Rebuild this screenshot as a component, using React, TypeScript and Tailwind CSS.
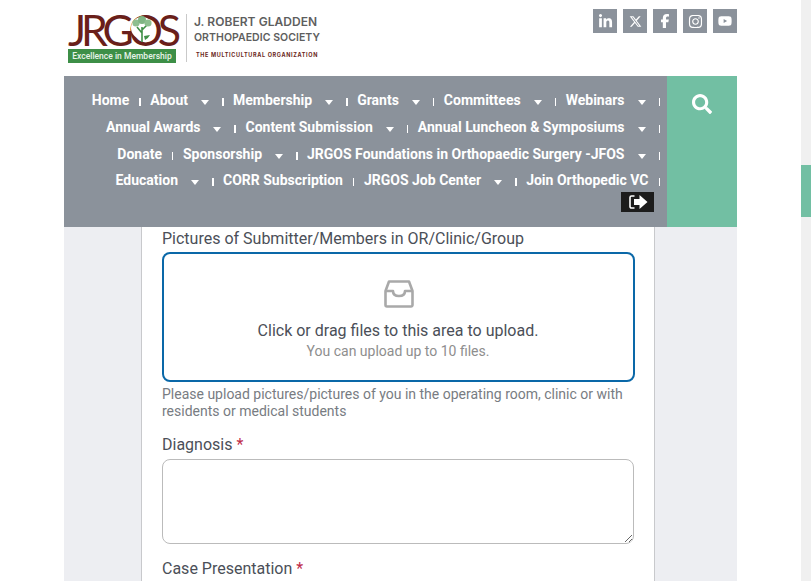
import { FaLinkedinIn, FaXTwitter, FaFacebookF, FaInstagram, FaYoutube } from 'react-icons/fa6';
import { FaSearch } from 'react-icons/fa';

const roboto = { fontFamily: 'Roboto, sans-serif' };

const menuRows = [
  { cls: 'pt-[15px]', items: [['Home', false], ['About', true], ['Membership', true], ['Grants', true], ['Committees', true], ['Webinars', true]] },
  { cls: 'pt-[8px]', items: [['Annual Awards', true], ['Content Submission', true], ['Annual Luncheon & Symposiums', true]] },
  { cls: 'pt-[8px]', items: [['Donate', false], ['Sponsorship', true], ['JRGOS Foundations in Orthopaedic Surgery -JFOS', true]] },
  { cls: 'pt-[7px]', items: [['Education', true], ['CORR Subscription', false], ['JRGOS Job Center', true], ['Join Orthopedic VC', false]] },
] as const;

function Caret() {
  return <span className="ml-[13px] mt-[3px] w-0 h-0 border-x-[4px] border-x-transparent border-t-[5px] border-t-white" />;
}

function NavRow({ items, cls }: { items: readonly (readonly [string, boolean])[]; cls: string }) {
  return (
    <div className={`flex justify-end items-center gap-[9.5px] h-[19px] box-content ${cls}`}>
      {items.map(([label, caret], i) => (
        <div key={i} className="flex items-center">
          <span className="text-[14px] leading-[19px] font-bold text-white whitespace-nowrap">{label}</span>
          {caret && <Caret />}
          <span className={`${caret ? 'ml-[13px]' : 'ml-[10px]'} mt-[3px] w-[1.5px] h-[8px] bg-white`} />
        </div>
      ))}
    </div>
  );
}

function Logo() {
  return (
    <div className="flex items-start">
      <div className="w-[108px] flex flex-col items-stretch">
        <div className="relative h-[35px]">
          <span className="absolute left-0 top-0 text-[43px] leading-[32px] text-[#6a1f1a] tracking-[-5.2px] whitespace-nowrap" style={{ fontFamily: 'Lato, sans-serif' }}>JRGOS</span>
          <svg viewBox="0 0 24 28" className="absolute left-[62px] top-[1px] w-[24px] h-[28px]">
            <circle cx="12" cy="13" r="11" fill="#fff" />
            <path d="M12 27V12M12 18l-5-6M12 15l5-5" stroke="#3f8f46" strokeWidth="1.600" fill="none" />
            <circle cx="6" cy="8" r="3.600" fill="#8dbf8f" />
            <circle cx="12" cy="5" r="4" fill="#7fb583" />
            <circle cx="18" cy="8" r="3.600" fill="#8dbf8f" />
            <path d="M20 20a11 11 0 0 1-5 5l-1-4z" fill="#3f8f46" />
          </svg>
        </div>
        <div className="h-[14px] bg-[#3d8f47] text-[#e9f3ea] text-[8.500px] leading-[14px] text-center font-medium whitespace-nowrap">Excellence in Membership</div>
      </div>
      <div className="ml-[10px] w-px h-[48px] bg-[#c9c9c9]" />
      <div className="ml-[7px] flex flex-col text-[#5e5e5e] whitespace-nowrap" style={{ fontFamily: 'Inter, sans-serif' }}>
        <span className="text-[12px] leading-[14px] font-semibold mt-[1px] tracking-[0.05px]">J. ROBERT GLADDEN</span>
        <span className="text-[10.5px] leading-[13px] font-semibold mt-[2px] tracking-[0.05px]">ORTHOPAEDIC SOCIETY</span>
        <span className="text-[5.5px] leading-[8px] font-bold mt-[7px] ml-[2px] text-[#6a1f1a] tracking-[0.65px]">THE MULTICULTURAL ORGANIZATION</span>
      </div>
    </div>
  );
}

export default function App() {
  const socials = [
    { Icon: FaLinkedinIn, cls: 'text-[15px]' },
    { Icon: FaXTwitter, cls: 'text-[13px] text-[#e4e6e9]' },
    { Icon: FaFacebookF, cls: 'text-[14px]' },
    { Icon: FaInstagram, cls: 'text-[15px]' },
    { Icon: FaYoutube, cls: 'text-[14px]' },
  ];

  return (
    <div className="h-[581px] w-[811px] overflow-hidden bg-white flex" style={roboto}>
      <div className="w-[801px] shrink-0 pl-[64px] pr-[64px]">
        <header className="flex justify-between h-[76px]">
          <div className="pl-[4px] pt-[14px]"><Logo /></div>
          <div className="flex gap-[6px] pt-[9px]">
            {socials.map(({ Icon, cls }, i) => (
              <div key={i} className={`w-[24px] h-[24px] bg-[#8b929b] flex items-center justify-center text-white ${cls}`}><Icon /></div>
            ))}
          </div>
        </header>

        <nav className="flex h-[151px]">
          <div className="w-[603px] bg-[#8b929b] pr-[7px]">
            {menuRows.map((row, i) => <NavRow key={i} items={row.items} cls={row.cls} />)}
            <div className="flex justify-end pr-[6px] pt-[2px]">
              <div className="w-[33px] h-[20px] bg-[#1c1c1c] flex items-center justify-center">
                <svg viewBox="0 0 20 16" className="w-[20px] h-[16px]">
                  <path d="M6.500 2H3.500A1.500 1.500 0 0 0 2 3.500v9A1.500 1.500 0 0 0 3.500 14H6.500" stroke="#fff" strokeWidth="1.600" fill="none" />
                  <path d="M6 5h5.500V1L19.500 8l-8 7v-4H6z" fill="#fff" />
                </svg>
              </div>
            </div>
          </div>
          <div className="w-[70px] bg-[#72bfa3] flex justify-center pt-[18px] text-white text-[20px]">
            <FaSearch />
          </div>
        </nav>

        <main className="bg-[#edeef2] h-[354px] pl-[77px] pr-[82px]">
          <div className="bg-white h-full border-x border-[#c8c9cc] pl-[20px] pr-[19px] text-[#4b4f58]">
            <div className="text-[16px] leading-[24px]">Pictures of Submitter/Members in OR/Clinic/Group</div>
            <div className="mt-[1px] h-[130px] border-2 border-[#0a68a8] rounded-[8px] flex flex-col items-center">
              <svg viewBox="0 0 32 32" className="w-[32px] h-[32px] mt-[24px] text-[#a9a9a9]" fill="none" stroke="currentColor" strokeWidth="2.600" strokeLinejoin="round">
                <path d="M2.500 13 6 3.500h20L29.500 13v14a1.500 1.500 0 0 1-1.500 1.500H4A1.500 1.500 0 0 1 2.500 27z" />
                <path d="M2.500 13H10c0 3 2 5 6 5s6-2 6-5h7.500" />
              </svg>
              <div className="text-[16px] leading-[24px] mt-[9px] -ml-[1px] text-[#4b4f58]">Click or drag files to this area to upload.</div>
              <div className="text-[14px] leading-[20px] text-[#8e8e8e] mt-[-2px] -ml-[1px]">You can upload up to 10 files.</div>
            </div>
            <p className="text-[14px] leading-[17px] mt-[4px] text-[#787c82]">Please upload pictures/pictures of you in the operating room, clinic or with residents or medical students</p>
            <div className="text-[16px] leading-[24px] mt-[13px]">Diagnosis <span className="text-[#c02b4a]">*</span></div>
            <textarea className="block mt-[2px] w-[472px] h-[85px] border border-[#bbbbbb] rounded-[8px] bg-white" />
            <div className="text-[16px] leading-[24px] mt-[13px]">Case Presentation <span className="text-[#c02b4a]">*</span></div>
          </div>
        </main>
      </div>

      <div className="w-[10px] bg-[#f0f0f0] relative">
        <div className="absolute left-0 top-[165px] w-[10px] h-[52px] bg-[#72bfa3]" />
      </div>
    </div>
  );
}
